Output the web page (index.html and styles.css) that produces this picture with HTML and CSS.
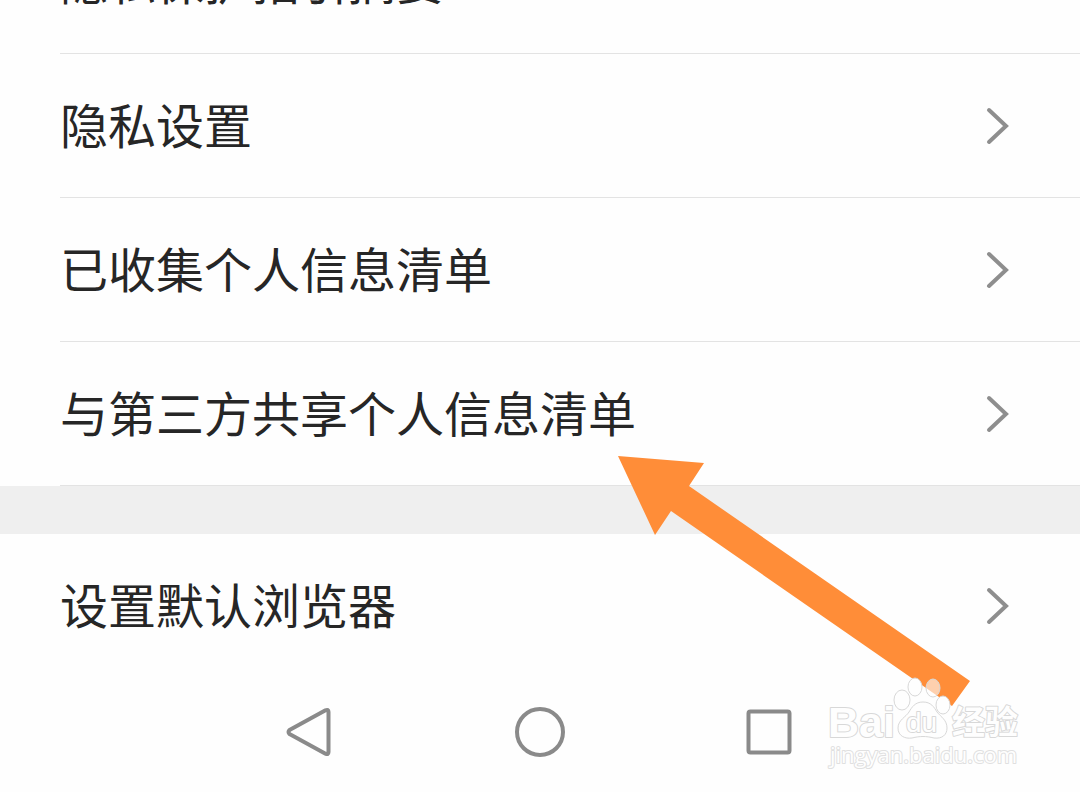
FILE: index.html
```html
<!DOCTYPE html>
<html lang="zh-CN">
<head>
<meta charset="utf-8">
<meta name="viewport" content="width=device-width, initial-scale=1">
<title>隐私设置</title>
<link rel="stylesheet" href="styles.css">
</head>
<body>
<div class="screen">
  <main class="settings">
    <section class="group">
      <button class="row" type="button"><span class="label">隐私保护指引摘要</span><svg class="chevron" viewBox="0 0 24 40" aria-hidden="true"><path d="M3 4 20 20 3 36"/></svg></button>
      <button class="row" type="button"><span class="label">隐私设置</span><svg class="chevron" viewBox="0 0 24 40" aria-hidden="true"><path d="M3 4 20 20 3 36"/></svg></button>
      <button class="row" type="button"><span class="label">已收集个人信息清单</span><svg class="chevron" viewBox="0 0 24 40" aria-hidden="true"><path d="M3 4 20 20 3 36"/></svg></button>
      <button class="row" type="button"><span class="label">与第三方共享个人信息清单</span><svg class="chevron" viewBox="0 0 24 40" aria-hidden="true"><path d="M3 4 20 20 3 36"/></svg></button>
    </section>
    <section class="group">
      <button class="row row-last" type="button"><span class="label">设置默认浏览器</span><svg class="chevron" viewBox="0 0 24 40" aria-hidden="true"><path d="M3 4 20 20 3 36"/></svg></button>
    </section>
  </main>
  <nav class="navbar" aria-label="系统导航">
    <button class="key" type="button" aria-label="返回"><svg viewBox="0 0 52 52"><path d="M40.500 4.300Q43.500 3 43.500 6V46Q43.500 49 40.500 47.700L4.500 28Q2.500 26 4.500 24Z"/></svg></button>
    <button class="key" type="button" aria-label="主页"><svg viewBox="0 0 52 52"><circle cx="26" cy="26" r="23"/></svg></button>
    <button class="key" type="button" aria-label="最近任务"><svg viewBox="0 0 52 52"><rect x="5.500" y="5.500" width="41" height="41" rx="2"/></svg></button>
  </nav>
  <svg class="arrow" viewBox="0 0 354 252" aria-hidden="true"><path d="M1 1 87 8 72 31 353 226 335 251 54 56 38 80Z"/></svg>
  <svg class="watermark" viewBox="0 0 200 96" role="img" aria-label="Baidu 经验">
    <g class="paw">
      <ellipse cx="76" cy="23" rx="8" ry="10"/>
      <ellipse cx="89" cy="10" rx="7" ry="9"/>
      <ellipse class="clear" cx="107" cy="11" rx="7" ry="9"/>
      <ellipse cx="117" cy="28" rx="7" ry="9"/>
      <path d="M97 25C89 25 86 30 83 35 80 40 72 43 72 51 72 59 79 62 86 61 94 59 100 59 108 61 116 62 121 58 121 51 121 43 115 40 111 35 108 30 105 25 97 25Z"/>
    </g>
    <text class="brand" x="2" y="60">Bai</text>
    <text class="du" x="80" y="55">du</text>
    <text class="brand-cn" x="126" y="57">经验</text>
    <text class="url" x="4" y="86">jingyan.baidu.com</text>
  </svg>
</div>
</body>
</html>
```
FILE: styles.css
```css
* { box-sizing: border-box; }

body {
  margin: 0;
  background: #fefefe;
  color: #262626;
  font-family: "Noto Sans CJK SC", "Noto Sans", sans-serif;
}

.screen {
  position: relative;
  min-height: 100vh;
  overflow: hidden;
}

/* The list is scrolled, so its first row is partly above the window. */
.settings { margin-top: -90px; }

.group + .group { border-top: 48px solid #efefef; }

.row {
  display: flex;
  align-items: center;
  justify-content: space-between;
  width: calc(100% - 60px);
  height: 144px;
  margin: 0 0 0 60px;
  padding: 0 70px 0 0;
  border: 0;
  border-bottom: 1px solid #e3e3e3;
  background: none;
  color: inherit;
  font: inherit;
  font-size: 48px;
  line-height: 72px;
  text-align: left;
}

.row-last { border-bottom-color: transparent; }

.label { padding-bottom: 6px; }

.chevron {
  width: 24px;
  height: 40px;
  fill: none;
  stroke: #8e8e8e;
  stroke-width: 4;
  stroke-linecap: round;
}

.navbar {
  display: flex;
  justify-content: center;
  padding: 28px 196px;
}

.key {
  flex: 1;
  display: flex;
  justify-content: center;
  padding: 0;
  border: 0;
  background: none;
}

.key svg {
  width: 52px;
  height: 52px;
  fill: none;
  stroke: #8a8a8a;
  stroke-width: 4;
  stroke-linejoin: round;
}

.arrow {
  position: absolute;
  top: 455px;
  left: 617px;
  width: 354px;
  height: 252px;
  fill: #ff8d38;
  pointer-events: none;
}

.watermark {
  position: absolute;
  top: 677px;
  left: 826px;
  width: 200px;
  height: 96px;
  fill: #fefefe;
  stroke: #d8d8d8;
  stroke-width: 2;
  pointer-events: none;
}

.watermark text {
  paint-order: stroke;
  stroke-linejoin: round;
}

.watermark .paw { stroke-width: 1; }

.clear { fill-opacity: 0.6; }

.brand { font: bold 43px "Liberation Sans", sans-serif; }

.du { font: 28px "Liberation Sans", sans-serif; }

.brand-cn { font: bold 33px "Noto Sans CJK SC", sans-serif; }

.watermark .url {
  font: 22px "Open Sans", sans-serif;
  stroke: #e0e0e0;
}
```
